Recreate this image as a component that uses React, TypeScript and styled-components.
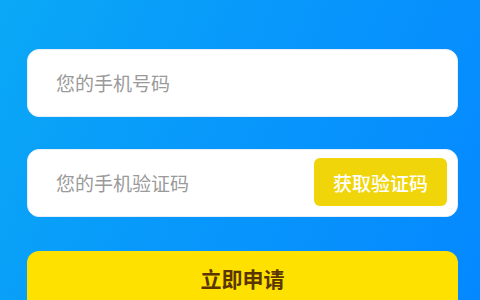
import React from "react"
import styled, { createGlobalStyle } from "styled-components"

const GlobalStyle = createGlobalStyle`
  html, body {
    margin: 0;
    padding: 0;
  }
  body {
    font-family: "Noto Sans CJK SC", "Noto Sans", sans-serif;
  }
`

export default function App() {
  return (
    <S.Page>
      <GlobalStyle />
      <S.Glow />
      <S.Form>
        <S.Field>
          <S.Input placeholder="您的手机号码" />
        </S.Field>
        <S.Field>
          <S.Input placeholder="您的手机验证码" />
          <S.CodeButton>获取验证码</S.CodeButton>
        </S.Field>
        <S.Submit>立即申请</S.Submit>
      </S.Form>
    </S.Page>
  )
}

const S = {
  Page: styled.div`
    position: relative;
    width: 480px;
    height: 300px;
    overflow: hidden;
    background: linear-gradient(115deg, #0aa8f6 0%, #0898fb 45%, #0588ff 100%);
  `,
  Glow: styled.div`
    position: absolute;
    left: 466px;
    top: -260px;
    width: 400px;
    height: 282px;
    border-radius: 50%;
    background: rgba(255, 255, 255, 0.12);
  `,
  Form: styled.div`
    display: flex;
    flex-direction: column;
    gap: 32px;
    padding: 49px 22px 0 27px;
  `,
  Field: styled.div`
    display: flex;
    align-items: center;
    height: 68px;
    box-sizing: border-box;
    padding: 0 10px 2px 26px;
    background: #fff;
    border: 1px solid #e8eef5;
    border-radius: 12px;
  `,
  Input: styled.input`
    flex: 1;
    min-width: 0;
    border: none;
    outline: none;
    background: transparent;
    font-family: "Noto Sans CJK SC", sans-serif;
    font-size: 19px;
    color: #333;
    &::placeholder {
      color: #9a9a9a;
    }
  `,
  CodeButton: styled.button`
    width: 133px;
    height: 48px;
    border: none;
    border-radius: 6px;
    background: #f0d50b;
    color: #fff;
    font-family: "Noto Sans CJK SC", sans-serif;
    font-size: 19px;
    font-weight: 500;
  `,
  Submit: styled.button`
    margin-top: 2px;
    height: 68px;
    border: none;
    border-radius: 12px;
    background: #ffe100;
    color: #5a3500;
    font-family: "Noto Sans CJK SC", sans-serif;
    font-size: 21px;
    font-weight: 700;
    padding: 0 0 14px;
  `,
}
